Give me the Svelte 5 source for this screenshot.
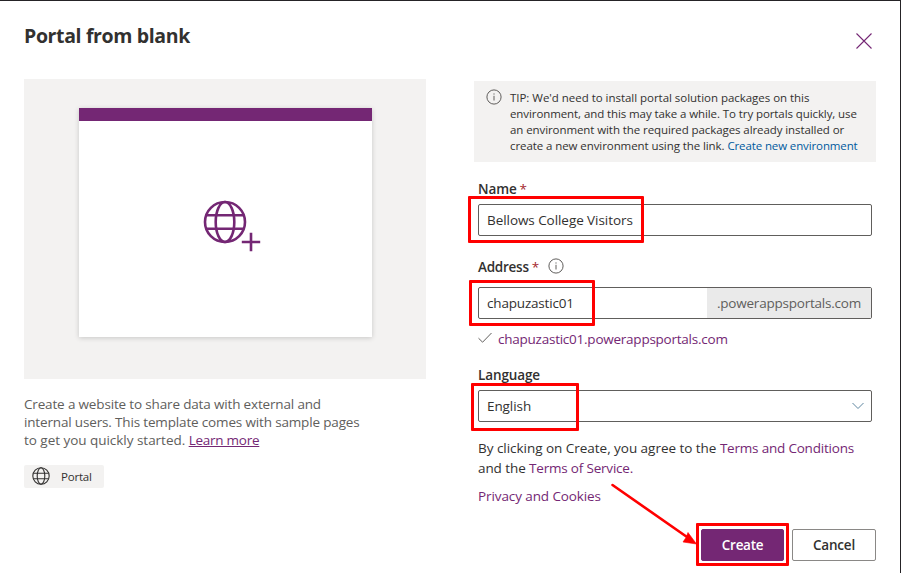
<script>
  const description = [
    { text: 'Create a website to share data with external and', spacing: -0.16 },
    { text: 'internal users. This template comes with sample pages', spacing: -0.16 }
  ];
  const tip = [
    { text: "TIP: We'd need to install portal solution packages on this", spacing: -0.03 },
    { text: 'environment, and this may take a while. To try portals quickly, use', spacing: -0.09 },
    { text: 'an environment with the required packages already installed or', spacing: -0.085 }
  ];
  let name = $state('Bellows College Visitors');
  let address = $state('chapuzastic01');
</script>

{#snippet globe(size, stroke)}
  <svg class="globe" width={size} height={size} viewBox="0 0 44 44" fill="none" stroke="currentColor" stroke-width={stroke}>
    <circle cx="22" cy="22" r="20" />
    <ellipse cx="22" cy="22" rx="9.3" ry="20" />
    <path d="M3.5 15.3H40.5M3.5 28.7H40.5" />
  </svg>
{/snippet}

{#snippet info()}
  <svg class="info" width="16" height="16" viewBox="0 0 16 16" fill="none" stroke="#605e5c">
    <circle cx="8" cy="8" r="7.1" />
    <path d="M8 6.8V11.5M8 4.4V5.6" />
  </svg>
{/snippet}

<div class="dialog">
  <header>
    <h1>Portal from blank</h1>
    <svg class="close" width="18" height="18" viewBox="0 0 18 18" stroke="#742774" stroke-width="1.1"><path d="M1.5 1.5L16.5 16.5M16.5 1.5L1.5 16.5" /></svg>
  </header>
  <main>
    <section class="left">
      <div class="preview">
        <div class="window">
          <div class="bar"></div>
          <div class="art">
            {@render globe(44, 2.6)}
            <svg class="plus" width="20" height="20" viewBox="0 0 20 20" stroke="#742774" stroke-width="2.6"><path d="M.8 10H19.2M10 .8V19.2" /></svg>
          </div>
        </div>
      </div>
      <div class="description">
        {#each description as line}
          <div style:letter-spacing="{line.spacing}px">{line.text}</div>
        {/each}
        <div class="last">to get you quickly started. <a class="underlined" href="#learn">Learn more</a></div>
      </div>
      <div class="chip">{@render globe(18, 2.7)}<span>Portal</span></div>
    </section>

    <section class="right">
      <div class="tip">
        {@render info()}
        <div class="tiptext">
          {#each tip as line}
            <div style:letter-spacing="{line.spacing}px">{line.text}</div>
          {/each}
          <div class="last">create a new environment using the link. <a class="blue" href="#env">Create new environment</a></div>
        </div>
      </div>
      <div class="form">
        <label class="name-label" for="name"><span>Name</span> <i>*</i></label>
        <div class="field">
          <input id="name" bind:value={name} />
          <b class="mark mark-name"></b>
        </div>
        <label class="address-label" for="address"><span>Address</span> <i>*</i>{@render info()}</label>
        <div class="field">
          <input id="address" bind:value={address} />
          <span class="suffix">.powerappsportals.com</span>
          <b class="mark mark-address"></b>
        </div>
        <div class="valid">
          <svg width="14" height="12" viewBox="0 0 14 12" fill="none" stroke="#605e5c"><path d="M.5 6.2L4.6 10.2L13.5 1" /></svg>
          <span>{address}.powerappsportals.com</span>
        </div>
        <div class="label language-label">Language</div>
        <div class="field select">
          <span>English</span>
          <svg width="12" height="8" viewBox="0 0 12 8" fill="none" stroke="#5e86a0"><path d="M.5 1L6 6.5L11.5 1" /></svg>
          <b class="mark mark-language"></b>
        </div>
        <div class="terms">
          <div class="t1">By clicking on Create, you agree to the <a href="#tc">Terms and Conditions</a></div>
          <div class="t2">and the <a href="#tos">Terms of Service.</a></div>
        </div>
        <a class="privacy" href="#privacy">Privacy and Cookies</a>
      </div>
      <footer>
        <button class="primary">Create<b class="mark mark-create"></b></button>
        <button>Cancel</button>
      </footer>
    </section>
  </main>
  <svg class="arrow" width="88" height="64" viewBox="0 0 88 64">
    <path d="M2.5 3L77 55" stroke="#f00" stroke-width="2.6" stroke-linecap="round" />
    <path d="M86.5 62L73 60L76 55.500L78 50.500Z" fill="#f00" stroke="#f00" stroke-width=".6" />
  </svg>
</div>

<style>
  :global(body) { margin: 0; overflow: hidden; }
  .dialog {
    position: relative;
    box-sizing: border-box;
    width: 901px;
    height: 573px;
    border-top: 1px solid #252326;
    border-right: 1px solid #252326;
    background: #fff;
    color: #323130;
    font: 13.5px/18px "Open Sans", "Noto Sans", sans-serif;
    white-space: nowrap;
    overflow: hidden;
  }
  .dialog * { box-sizing: border-box; }
  svg { display: block; flex: none; }
  a { color: #742774; text-decoration: none; }
  header { display: flex; justify-content: space-between; height: 78px; padding: 21px 27px 0 24px; }
  h1 { margin: 0; font-size: 19.5px; line-height: 27px; font-weight: 700; letter-spacing: -.36px; }
  .close { margin-top: 10px; }
  main { display: flex; gap: 48px; padding-left: 24px; }
  .left, .right { width: 402px; }
  .preview { display: flex; justify-content: center; height: 300px; padding: 29px 0 0; background: #f3f2f1; }
  .window { width: 293px; height: 229px; background: #fff; box-shadow: 0 1px 5px rgba(0, 0, 0, .18); }
  .bar { height: 12.5px; background: #742774; }
  .art { position: relative; width: 58px; margin: 79px 0 0 124.5px; color: #742774; }
  .plus { position: absolute; left: 38px; top: 32px; }
  .description { padding-top: 16px; color: #605e5c; }
  .description .last { letter-spacing: -.03px; }
  .description .underlined { text-decoration: underline; letter-spacing: -.25px; }
  .chip { display: flex; align-items: center; width: 80px; height: 23px; margin-top: 16px; padding-left: 8px; gap: 11px; border-radius: 2px; background: #f3f2f1; font-size: 11.5px; letter-spacing: -.2px; }
  .chip svg { margin-top: -1px; }
  .tip { display: flex; gap: 8.5px; height: 81px; margin-top: 2px; padding: 8px 0 0 11.5px; background: #f3f2f1; font-size: 11.5px; line-height: 16px; }
  .tiptext { padding-top: 1px; }
  .tiptext .last { letter-spacing: -.08px; }
  .tiptext .blue { color: #005a9e; letter-spacing: -.12px; }
  .form { padding: 0 4px; }
  label, .label { display: flex; align-items: center; height: 20px; font-weight: 600; letter-spacing: -.12px; }
  label i { margin-left: 3px; font-style: normal; font-weight: 400; color: #a4262c; }
  .name-label { margin: 17px 0 5px; }
  .address-label { margin: 21px 0 10px; }
  .address-label span { letter-spacing: -.25px; }
  .address-label :global(svg) { margin: -3px 0 0 9px; }
  .field { position: relative; display: flex; height: 32px; border: 1px solid #605e5c; border-radius: 2px; }
  input { flex: 1; min-width: 0; padding: 0 8px; border: 0; outline: 0; background: none; color: inherit; font: inherit; letter-spacing: -.06px; }
  #address { letter-spacing: -.18px; }
  .suffix { width: 164px; padding-left: 10px; background: #eaeaea; color: #605e5c; line-height: 30px; letter-spacing: -.22px; }
  .valid { display: flex; align-items: center; gap: 6px; height: 20px; margin-top: 10px; color: #742774; letter-spacing: -.24px; }
  .valid svg { margin-top: -3px; }
  .language-label { margin: 16px 0 5px; }
  .select { align-items: center; justify-content: space-between; padding: 0 7px 0 8px; letter-spacing: -.08px; }
  .terms { margin-top: 16px; line-height: 20px; }
  .t1 { letter-spacing: -.03px; }
  .t1 a { letter-spacing: -.2px; }
  .t2 { letter-spacing: -.08px; }
  .t2 a { letter-spacing: -.2px; }
  .privacy { display: block; margin-top: 8px; line-height: 20px; letter-spacing: -.1px; }
  footer { display: flex; justify-content: flex-end; gap: 8px; margin-top: 23px; }
  button { position: relative; width: 84px; height: 32px; padding: 0; border: 1px solid #8a8886; border-radius: 2px; background: #fff; color: #323130; font: 600 13.5px/20px "Open Sans", "Noto Sans", sans-serif; letter-spacing: -.2px; }
  .primary { width: 83px; border-color: #742774; background: #742774; color: #fff; letter-spacing: -.3px; }
  .mark { position: absolute; border: 3px solid #f00; border-radius: 1px; pointer-events: none; }
  .mark-name { left: -11px; top: -9px; width: 176px; height: 47px; }
  .mark-address { left: -10px; top: -8px; width: 126px; height: 46px; }
  .mark-language { left: -8px; top: -8px; width: 108px; height: 48px; }
  .mark-create { left: -6px; top: -7px; width: 93px; height: 43px; }
  .arrow { position: absolute; left: 610px; top: 481px; }
</style>
